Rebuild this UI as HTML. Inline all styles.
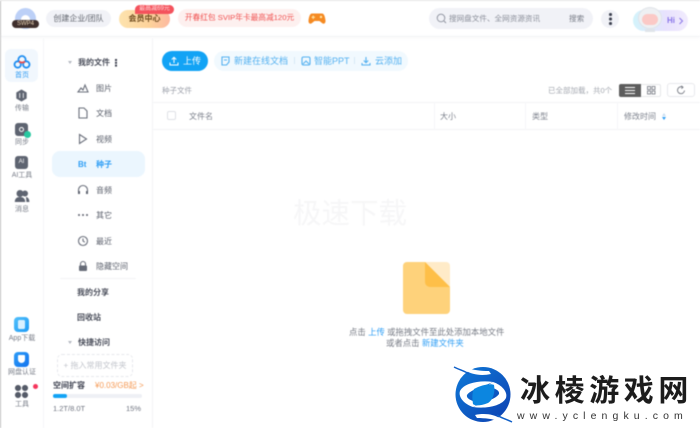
<!DOCTYPE html>
<html lang="zh"><head><meta charset="utf-8"><style>
*{box-sizing:border-box}
html,body{margin:0;padding:0}
body{width:700px;height:428px;overflow:hidden;background:#fff;position:relative;font-family:"Liberation Sans","Noto Sans CJK SC",sans-serif}
#w{position:absolute;left:0;top:0;width:700px;height:428px;filter:blur(.4px)}
.a{position:absolute;white-space:nowrap}
svg{position:absolute;overflow:visible}
.nav{font-size:8px;color:#5b606c;}
.side{font-size:7px;color:#777c87;text-align:center;width:44px;left:0}
.b{font-weight:700;color:#4a4e5b}
.tb{font-size:8px;color:#7c818c}
.i{fill:none;stroke:#6a6f7b;stroke-width:1.1}
</style></head><body>
<div id="w">
<div class="a" style="left:0;top:0;width:700px;height:1px;background:#e4e4e4"></div>
<div class="a" style="left:0;top:1px;width:1px;height:427px;background:#bdbdbd"></div>
<div class="a" style="left:1px;top:36px;width:699px;height:1px;background:#f2f3f5;box-shadow:0 1px 3px #f0f0f2"></div>
<div class="a" style="left:43px;top:38px;width:1px;height:390px;background:#f5f6f8"></div>
<div class="a" style="left:152px;top:38px;width:1px;height:390px;background:#f3f4f6"></div>

<!-- top bar -->
<div class="a" style="left:15px;top:8px;width:21px;height:21px;border-radius:50%;background:#bcd0f7"></div>
<div class="a" style="left:21px;top:15px;width:9px;height:9px;border-radius:50%;background:#fff"></div>
<div class="a" style="left:12px;top:20px;width:27px;height:8px;border-radius:4px;background:#3f2f2c;color:#e9d6b8;font-size:6px;line-height:8px;text-align:center">SWP4</div>
<div class="a" style="left:46px;top:10px;width:65px;height:17px;border-radius:9px;background:#f1f2f7;color:#62666f;font-size:8px;line-height:17px;text-align:center">创建企业/团队</div>
<div class="a" style="left:119px;top:10px;width:51px;height:18px;border-radius:9px;background:linear-gradient(90deg,#fde3ae,#fdd29a 60%,#fdb9a0);color:#6e4a1e;font-size:8px;line-height:18px;text-align:center;font-weight:700">会员中心</div>
<div class="a" style="left:135px;top:5px;width:39px;height:9px;border-radius:5px 5px 5px 0;background:#f4525c;color:#ffd9d9;font-size:6px;line-height:9px;text-align:center">最高减69元</div>
<div class="a" style="left:178px;top:9px;width:123px;height:18px;border-radius:9px;background:#fdf0ef;color:#f0504f;font-size:7.700px;line-height:18px;text-align:center">开春红包 SVIP年卡最高减120元</div>
<svg style="left:308px;top:12px" width="18" height="13" viewBox="0 0 18 13"><path d="M4 1.500h10c2 0 3 3 3.500 7 .3 3-2 4-3.500 2.500L11.500 9h-5L4 11c-1.500 1.500-3.800.5-3.500-2.500C1 4.500 2 1.500 4 1.500z" fill="#f58a22"/><circle cx="13" cy="5" r="1.200" fill="#ffe7a8"/><path d="M3.500 5.200h3.500M5.200 3.500V7" stroke="#ffe7a8" stroke-width="1"/></svg>

<div class="a" style="left:429px;top:8px;width:164px;height:21px;border-radius:11px;background:#f1f2f7"></div>
<svg style="left:436px;top:13px" width="11" height="11" viewBox="0 0 11 11"><circle cx="5" cy="5" r="3.800" fill="none" stroke="#8a8f9b" stroke-width=".9"/><path d="M8 8l2 2" stroke="#8a8f9b" stroke-width=".9"/></svg>
<div class="a" style="left:449px;top:13px;font-size:7.600px;line-height:11px;color:#8b8f9a">搜网盘文件、全网资源资讯</div>
<div class="a" style="left:569px;top:13px;font-size:7.600px;line-height:11px;color:#7a7e89">搜索</div>
<div class="a" style="left:601px;top:10px;width:18px;height:18px;border-radius:50%;background:#f1f2f7"></div>
<div class="a" style="left:609px;top:13px;width:2.500px;height:2.500px;border-radius:50%;background:#3d4150;box-shadow:0 4.500px 0 #3d4150,0 9px 0 #3d4150"></div>
<div class="a" style="left:633px;top:10px;width:55px;height:21px;border-radius:11px;background:linear-gradient(90deg,#d3f3fb,#e8e2fd 60%,#f1ebfd)"></div>
<div class="a" style="left:638px;top:7px;width:24px;height:22px;border-radius:50%;background:#eef0f3;border:1px solid #dfe3e8"></div>
<div class="a" style="left:642px;top:14px;width:16px;height:11px;border-radius:6px;background:#fbc9c6"></div>
<div class="a" style="left:645px;top:29px;width:10px;height:3px;background:#dfe4ea"></div>
<div class="a" style="left:667px;top:15px;font-size:8px;font-weight:700;line-height:11px;color:#8a76e8">Hi</div>
<svg style="left:678px;top:17px" width="6" height="8"><path d="M1.500 1l3 3-3 3" fill="none" stroke="#8a76e8" stroke-width="1"/></svg>

<!-- left rail -->
<div class="a" style="left:5px;top:49px;width:33px;height:33px;border-radius:6px;background:#f1f7fd"></div>
<svg style="left:13px;top:55px" width="18" height="15" viewBox="0 0 18 15"><circle cx="4.700" cy="9.500" r="3.200" fill="none" stroke="#1f8ef1" stroke-width="1.800"/><circle cx="13.300" cy="9.500" r="3.200" fill="none" stroke="#1f8ef1" stroke-width="1.800"/><path d="M5.900 6.500a3.600 3.600 0 1 1 6.200 0" fill="none" stroke="#1f8ef1" stroke-width="1.800"/><path d="M6 6.500q3 2.200 6 0" fill="none" stroke="#e9504f" stroke-width="1.800"/></svg>
<div class="a side" style="top:71px;color:#2e9bf3;line-height:9px">首页</div>
<svg style="left:15px;top:89px" width="13" height="13" viewBox="0 0 13 13"><path d="M6.500.5l5.200 3v6l-5.200 3-5.200-3v-6z" fill="#5e6471"/><path d="M4.700 4v5M8.300 4v5" stroke="#fff" stroke-width=".8"/></svg>
<div class="a side" style="top:104px;line-height:9px">传输</div>
<div class="a" style="left:15px;top:123px;width:13px;height:13px;border-radius:3px;background:#5e6471"></div>
<div class="a" style="left:19px;top:127px;width:5px;height:5px;border-radius:50%;border:1.200px solid #fff"></div>
<div class="a" style="left:24px;top:131px;width:7px;height:7px;border-radius:50%;background:#28c8a0"></div>
<div class="a side" style="top:138px;line-height:9px">同步</div>
<div class="a" style="left:15px;top:156px;width:13px;height:13px;border-radius:3px;background:#5e6471;color:#fff;font-size:6px;line-height:13px;text-align:center">AI</div>
<div class="a side" style="top:171px;line-height:9px">AI工具</div>
<svg style="left:14px;top:189px" width="16" height="14" viewBox="0 0 16 14"><circle cx="6" cy="4.500" r="3.500" fill="#5e6471"/><circle cx="11" cy="4.500" r="3" fill="#5e6471"/><path d="M.8 13c0-3.500 2-5 5.200-5s5.200 1.500 5.200 5zM12 8c2 .2 3.400 2 3.400 5h-3z" fill="#5e6471"/></svg>
<div class="a side" style="top:205px;line-height:9px">消息</div>
<div class="a" style="left:14px;top:317px;width:15px;height:15px;border-radius:4px;background:linear-gradient(135deg,#52c0fb,#1f9bf5)"></div>
<div class="a" style="left:18px;top:320px;width:7px;height:9px;border-radius:1.500px;background:#d8f0ff"></div>
<div class="a side" style="top:334px;line-height:9px">App下载</div>
<div class="a" style="left:14px;top:352px;width:15px;height:15px;border-radius:4px;background:linear-gradient(135deg,#2e9df7,#1273ee)"></div>
<div class="a" style="left:18px;top:355px;width:7px;height:8px;border-radius:1px 1px 4px 4px;background:#fff"></div>
<div class="a side" style="top:368px;line-height:9px">网盘认证</div>
<div class="a" style="left:15px;top:385px;width:13px;height:13px;background:
radial-gradient(circle at 3px 3px,#555b68 2.900px,transparent 3.100px),
radial-gradient(circle at 10px 3px,#555b68 2.900px,transparent 3.100px),
radial-gradient(circle at 3px 10px,#555b68 2.900px,transparent 3.100px),
radial-gradient(circle at 10px 10px,#555b68 2.900px,transparent 3.100px)"></div>
<div class="a" style="left:33px;top:384px;width:5px;height:5px;border-radius:50%;background:#f5365c"></div>
<div class="a side" style="top:400px;line-height:9px">工具</div>

<!-- nav -->
<div class="a" style="left:68px;top:61px;width:0;height:0;border:2.500px solid transparent;border-top:3.500px solid #b5b9c2"></div>
<div class="a nav b" style="left:78px;top:57px;line-height:11px">我的文件</div>
<div class="a" style="left:115px;top:59px;width:1.800px;height:1.800px;background:#3d4150;box-shadow:0 2.800px 0 #3d4150,0 5.600px 0 #3d4150"></div>
<svg style="left:77px;top:83px" width="12" height="10" viewBox="0 0 12 10"><path d="M1 9l3-4 2 2 2-5 3 7z" class="i"/></svg>
<div class="a nav" style="left:96px;top:83px;line-height:11px">图片</div>
<svg style="left:78px;top:107px" width="10" height="12" viewBox="0 0 10 12"><path d="M1 1h5l3 3v7H1z" class="i"/></svg>
<div class="a nav" style="left:96px;top:108px;line-height:11px">文档</div>
<svg style="left:78px;top:133px" width="10" height="12" viewBox="0 0 10 12"><path d="M1.500 1.500l7 4.500-7 4.500z" class="i"/></svg>
<div class="a nav" style="left:96px;top:134px;line-height:11px">视频</div>
<div class="a" style="left:52px;top:151px;width:93px;height:26px;border-radius:8px;background:#ebf6fe"></div>
<div class="a" style="left:78px;top:159px;font-size:8px;line-height:11px;font-weight:700;color:#2e9ef5">Bt</div>
<div class="a" style="left:96px;top:159px;font-size:8px;line-height:11px;color:#2e9ef5;font-weight:700">种子</div>
<svg style="left:77px;top:184px" width="12" height="11" viewBox="0 0 12 11"><path d="M1.500 8V6a4.500 4.500 0 0 1 9 0v2" class="i"/><path d="M1 7h2v3H1zM9 7h2v3H9z" fill="#5f6470"/></svg>
<div class="a nav" style="left:96px;top:185px;line-height:11px">音频</div>
<div class="a" style="left:78px;top:214px;width:2px;height:2px;border-radius:50%;background:#5f6470;box-shadow:4px 0 0 #5f6470,8px 0 0 #5f6470"></div>
<div class="a nav" style="left:96px;top:210px;line-height:11px">其它</div>
<svg style="left:77px;top:235px" width="12" height="12" viewBox="0 0 12 12"><circle cx="6" cy="6" r="4.500" class="i"/><path d="M6 3.500V6l1.800 1.200" class="i"/></svg>
<div class="a nav" style="left:96px;top:236px;line-height:11px">最近</div>
<svg style="left:77px;top:260px" width="12" height="12" viewBox="0 0 12 12"><path d="M3.500 5.500V4a2.500 2.500 0 0 1 5 0v1.500" class="i"/><rect x="2" y="5.500" width="8" height="5.500" rx="1" fill="#666b77"/></svg>
<div class="a nav" style="left:96px;top:261px;line-height:11px">隐藏空间</div>
<div class="a" style="left:60px;top:278px;width:76px;height:1px;background:#f3f4f6"></div>
<div class="a nav b" style="left:77px;top:287px;line-height:11px">我的分享</div>
<div class="a nav b" style="left:77px;top:312px;line-height:11px">回收站</div>
<div class="a" style="left:68px;top:341px;width:0;height:0;border:2.500px solid transparent;border-top:3.500px solid #b5b9c2"></div>
<div class="a nav b" style="left:78px;top:337px;line-height:11px">快捷访问</div>
<div class="a" style="left:57px;top:354px;width:76px;height:23px;border:1px dashed #e6e8ec;border-radius:5px;font-size:8px;color:#c2c5cc;line-height:21px;text-align:center">+ 拖入常用文件夹</div>
<div class="a" style="left:53px;top:380px;font-size:8px;font-weight:700;line-height:11px;color:#3d4150">空间扩容</div>
<div class="a" style="left:95px;top:380px;font-size:8px;line-height:11px;color:#f59a55">¥0.03/GB起 &gt;</div>
<div class="a" style="left:53px;top:394px;width:89px;height:4px;border-radius:2px;background:#eef0f5"></div>
<div class="a" style="left:53px;top:394px;width:14px;height:4px;border-radius:2px;background:#12a3f5"></div>
<div class="a" style="left:53px;top:403px;font-size:7.500px;line-height:11px;color:#6f7480">1.2T/8.0T</div>
<div class="a" style="left:126px;top:403px;font-size:7.500px;line-height:11px;color:#6f7480">15%</div>

<!-- toolbar -->
<div class="a" style="left:162px;top:51px;width:46px;height:20px;border-radius:10px;background:#12a3f5;color:#fff;font-size:9px;line-height:20px;padding-left:21px">上传</div>
<svg style="left:169px;top:56px" width="10" height="10" viewBox="0 0 10 10"><path d="M5 7V1.500M2.800 3.500L5 1.300l2.200 2.200M1 6.500V9h8V6.500" fill="none" stroke="#fff" stroke-width="1"/></svg>
<div class="a" style="left:214px;top:51px;width:194px;height:20px;border-radius:10px;background:#f1f9fe"></div>
<svg style="left:221px;top:56px" width="9" height="10" viewBox="0 0 9 10"><path d="M1 1h7v5L5.500 9H1z" fill="none" stroke="#52b0f0" stroke-width="1.100"/><path d="M3 4h3" stroke="#52b0f0"/></svg>
<div class="a" style="left:234px;top:55px;font-size:9px;line-height:12px;color:#52b0f0">新建在线文档</div>
<div class="a" style="left:294px;top:57px;width:1px;height:7px;background:#d5e8f5"></div>
<svg style="left:301px;top:56px" width="10" height="10" viewBox="0 0 10 10"><rect x="1" y="1" width="8" height="8" rx="1.500" fill="none" stroke="#52b0f0" stroke-width="1.100"/><path d="M2 8l3-3 3 3" fill="none" stroke="#52b0f0"/></svg>
<div class="a" style="left:314px;top:55px;font-size:9px;line-height:12px;color:#52b0f0">智能PPT</div>
<div class="a" style="left:354px;top:57px;width:1px;height:7px;background:#d5e8f5"></div>
<svg style="left:361px;top:56px" width="10" height="10" viewBox="0 0 10 10"><path d="M5 1v5.500M2.800 4.500L5 6.700l2.200-2.200M1 7v2h8V7" fill="none" stroke="#52b0f0" stroke-width="1.100"/></svg>
<div class="a" style="left:375px;top:55px;font-size:9px;line-height:12px;color:#52b0f0">云添加</div>

<div class="a" style="left:162px;top:85px;font-size:7.500px;line-height:11px;color:#9a9ea8">种子文件</div>
<div class="a" style="left:548px;top:85px;font-size:7.500px;line-height:11px;color:#a4a8b0">已全部加载，共0个</div>
<div class="a" style="left:619px;top:84px;width:22px;height:13px;background:#5c5c5c;border-radius:2px 0 0 2px"></div>
<div class="a" style="left:625px;top:87px;width:10px;height:1px;background:#fff;box-shadow:0 3px 0 #fff,0 6px 0 #fff"></div>
<div class="a" style="left:641px;top:84px;width:20px;height:13px;border:1px solid #e6e7ea;border-left:0;border-radius:0 2px 2px 0"></div>
<svg style="left:647px;top:86px" width="9" height="9" viewBox="0 0 9 9"><rect x=".5" y=".5" width="3" height="3" fill="none" stroke="#70747e" stroke-width=".8"/><rect x="5" y=".5" width="3" height="3" fill="none" stroke="#70747e" stroke-width=".8"/><rect x=".5" y="5" width="3" height="3" fill="none" stroke="#70747e" stroke-width=".8"/><rect x="5" y="5" width="3" height="3" fill="none" stroke="#70747e" stroke-width=".8"/></svg>
<div class="a" style="left:667px;top:83px;width:28px;height:14px;border:1px solid #e8e9ec;border-radius:3px"></div>
<svg style="left:676px;top:85px" width="10" height="10" viewBox="0 0 10 10"><path d="M6.800 2.200A3.500 3.500 0 1 0 8.500 5.500M5.300.8l1.700 1.400-1.600 1.400" fill="none" stroke="#70747e" stroke-width=".9"/></svg>

<!-- table head -->
<div class="a" style="left:153px;top:102px;width:547px;height:1px;background:#f3f4f6"></div>
<div class="a" style="left:153px;top:129px;width:547px;height:1px;background:#f3f4f6"></div>
<div class="a" style="left:434px;top:103px;width:1px;height:26px;background:#f5f6f8"></div>
<div class="a" style="left:525px;top:103px;width:1px;height:26px;background:#f5f6f8"></div>
<div class="a" style="left:617px;top:103px;width:1px;height:26px;background:#f5f6f8"></div>
<div class="a" style="left:167px;top:111px;width:9px;height:9px;border:1px solid #dfe1e6;border-radius:2px"></div>
<div class="a tb" style="left:189px;top:111px;line-height:11px">文件名</div>
<div class="a tb" style="left:440px;top:111px;line-height:11px">大小</div>
<div class="a tb" style="left:532px;top:111px;line-height:11px">类型</div>
<div class="a tb" style="left:624px;top:111px;line-height:11px">修改时间</div>
<div class="a" style="left:662px;top:113px;width:0;height:0;border:2px solid transparent;border-bottom:3px solid #c8dcf0;border-top:0"></div>
<div class="a" style="left:662px;top:117px;width:0;height:0;border:2px solid transparent;border-top:3px solid #2e9ef5;border-bottom:0"></div>

<!-- empty state -->
<div class="a" style="left:293px;top:196px;font-size:28.500px;line-height:36px;color:#f6f6f7">极速下载</div>
<svg style="left:403px;top:262px" width="47" height="52" viewBox="0 0 47 52"><path d="M4 0h20l23 25v23a4 4 0 0 1-4 4H4a4 4 0 0 1-4-4V4a4 4 0 0 1 4-4z" fill="#fed27b"/><path d="M22 0h21a4 4 0 0 1 4 4v21z" fill="#ffebc8"/><path d="M22 0l25 25H27a5 5 0 0 1-5-5z" fill="#febf48"/></svg>
<div class="a" style="left:349px;top:326px;font-size:8.400px;line-height:12px;color:#777b85">点击 <span style="color:#2e9ef5">上传</span> 或拖拽文件至此处添加本地文件</div>
<div class="a" style="left:386px;top:337px;font-size:8.400px;line-height:12px;color:#777b85">或者点击 <span style="color:#2e9ef5">新建文件夹</span></div>
</div>

<!-- watermark -->
<svg style="left:448px;top:362px" width="70" height="66" viewBox="0 0 70 66">
<defs><linearGradient id="lg" x1="0" y1="0" x2="1" y2="1"><stop offset="0" stop-color="#0f7ad8"/><stop offset="1" stop-color="#0d3fb0"/></linearGradient></defs>
<circle cx="35" cy="32.500" r="27.500" fill="url(#lg)"/>
<path d="M45 20C32 18 16 21 12 29 10 35 16 42 25 45l7-4C24 39 18 37 19 33 22 28 34 25 45 20z" fill="#fff"/>
<path d="M25 45C38 47 54 44 58 36 60 30 54 23 45 20l-7 4C46 26 52 28 51 32 48 37 36 40 25 45z" fill="#fff"/>
<path d="M26 27C33 23 43 21 46 23 47 29 46 37 40 41 32 44 27 44 25 42 24 36 24 31 26 27z" fill="#0c86e0"/>
<path d="M17 8C24 13 34 14 43 12L41 9C33 9 25 8 20 6z" fill="#fff"/>
<path d="M53 57C46 52 36 51 27 53L29 56C37 56 45 57 50 59z" fill="#fff"/>
<path d="M6 5C12 8 17 9 21 12" stroke="#0f5fc8" stroke-width="1.500" fill="none"/>
<path d="M64 60C58 57 53 56 49 53" stroke="#0f5fc8" stroke-width="1.500" fill="none"/>
</svg>
<div class="a" style="left:520px;top:367px;font-size:30px;line-height:42px;color:#1c1c1c;font-weight:700;letter-spacing:4.600px;font-family:'Noto Sans CJK SC','WenQuanYi Zen Hei',sans-serif">冰棱游戏网</div>
<div class="a" style="left:517px;top:409px;font-size:10.500px;line-height:14px;color:#333;letter-spacing:5.100px">www.yclengku.com</div>
</body></html>
